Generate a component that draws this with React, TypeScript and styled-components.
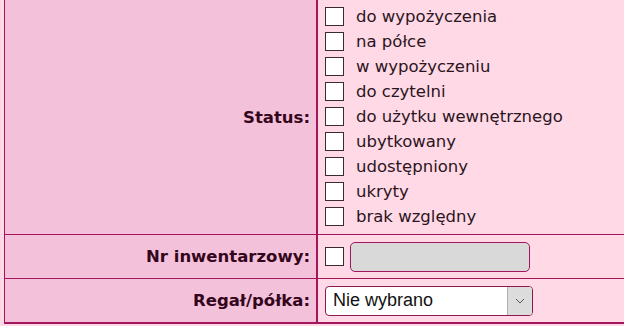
import styled, { createGlobalStyle } from "styled-components";

const GlobalStyle = createGlobalStyle`
  html, body {
    margin: 0;
    padding: 0;
    background: #ffd9e6;
  }
  body {
    font-family: "DejaVu Sans", Verdana, sans-serif;
    color: #2b1420;
  }
`;

const Page = styled.div`
  padding-left: 4px;
  width: 640px;
`;

const Table = styled.div`
  display: grid;
  grid-template-columns: 313px 1fr;
  border-left: 1px solid #a3165c;
  border-bottom: 2px solid #a3165c;
`;

const LabelCell = styled.div<{ last?: boolean }>`
  background: #f3c1d9;
  border-right: 2px solid #a3165c;
  border-bottom: ${({ last }) => (last ? "none" : "1px solid #a3165c")};
  display: flex;
  align-items: center;
  justify-content: flex-end;
  padding-right: 6px;
  font-weight: bold;
  font-size: 16.5px;
  color: #33061c;
`;

const ValueCell = styled.div<{ last?: boolean; tall?: boolean }>`
  background: #ffd9e6;
  border-bottom: ${({ last }) => (last ? "none" : "1px solid #a3165c")};
  padding: ${({ tall }) => (tall ? "4px 0 5px 7px" : "0 0 0 7px")};
  min-height: 43px;
  display: flex;
  align-items: center;
`;

const List = styled.div`
  display: flex;
  flex-direction: column;
`;

const Option = styled.label`
  display: flex;
  align-items: center;
  gap: 12px;
  height: 25px;
  font-size: 16.5px;
  color: #2b1420;
`;

const Box = styled.span`
  display: inline-block;
  width: 17px;
  height: 17px;
  background: #fff;
  border: 1px solid #3c2a33;
  flex-shrink: 0;
`;

const Inline = styled.div`
  display: flex;
  align-items: center;
  gap: 6px;
`;

const TextInput = styled.div`
  width: 178px;
  height: 28px;
  background: #d9d9d9;
  border: 1px solid #a3165c;
  border-radius: 5px;
`;

const Select = styled.div`
  width: 206px;
  height: 28px;
  background: #fff;
  border: 1px solid #8a1a50;
  border-radius: 4px;
  display: flex;
  align-items: stretch;
  font-family: "Liberation Sans", Arial, sans-serif;
  font-size: 18px;
  color: #111;
  overflow: hidden;
`;

const SelectText = styled.span`
  flex: 1;
  display: flex;
  align-items: center;
  padding-left: 7px;
`;

const Arrow = styled.span`
  width: 24px;
  background: #dcdcdc;
  border-left: 1px solid #b0b0b0;
  display: flex;
  align-items: center;
  justify-content: center;
`;

const statuses = [
  "do wypożyczenia",
  "na półce",
  "w wypożyczeniu",
  "do czytelni",
  "do użytku wewnętrznego",
  "ubytkowany",
  "udostępniony",
  "ukryty",
  "brak względny",
];

export default function App() {
  return (
    <Page>
      <GlobalStyle />
      <Table>
        <LabelCell>Status:</LabelCell>
        <ValueCell tall>
          <List>
            {statuses.map((s) => (
              <Option key={s}>
                <Box />
                {s}
              </Option>
            ))}
          </List>
        </ValueCell>

        <LabelCell>Nr inwentarzowy:</LabelCell>
        <ValueCell>
          <Inline>
            <Box />
            <TextInput />
          </Inline>
        </ValueCell>

        <LabelCell last>Regał/półka:</LabelCell>
        <ValueCell last>
          <Select>
            <SelectText>Nie wybrano</SelectText>
            <Arrow>
              <svg width="10" height="6" viewBox="0 0 10 6">
                <path d="M1 1 L5 5 L9 1" fill="none" stroke="#555" strokeWidth="1" />
              </svg>
            </Arrow>
          </Select>
        </ValueCell>
      </Table>
    </Page>
  );
}
